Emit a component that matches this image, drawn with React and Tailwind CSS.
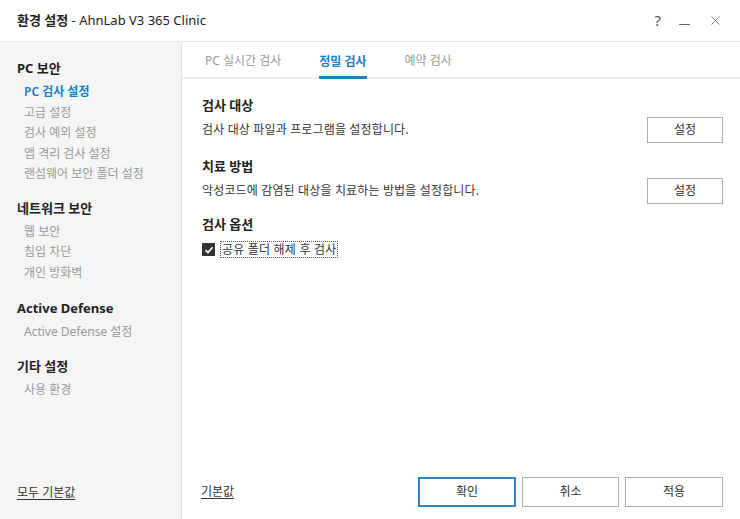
import { X, Minus } from 'lucide-react';

const FONT = { fontFamily: '"Noto Sans", "Noto Sans CJK KR", sans-serif' };

const SIDE = [
  { title: 'PC 보안', items: ['PC 검사 설정', '고급 설정', '검사 예외 설정', '앱 격리 검사 설정', '랜섬웨어 보안 폴더 설정'] },
  { title: '네트워크 보안', items: ['웹 보안', '침입 차단', '개인 방화벽'] },
  { title: 'Active Defense', items: ['Active Defense 설정'], extra: 'mt-[2px]' },
  { title: '기타 설정', items: ['사용 환경'] },
];

function Section({ title, desc, className = '' }) {
  return (
    <div className={className}>
      <h3 className="text-[13px] font-bold text-[#222] leading-[18px]">{title}</h3>
      {desc && (
        <div className="flex items-center justify-between mt-[3px]">
          <p className="text-[12px] text-[#333] tracking-[0.15px]">{desc}</p>
          <button className="w-[76px] h-[26px] border border-[#adadad] bg-white text-[12px] text-[#333]">설정</button>
        </div>
      )}
    </div>
  );
}

export default function App() {
  return (
    <div className="w-[740px] h-[519px] bg-white flex flex-col overflow-hidden" style={FONT}>
      {/* title bar */}
      <div className="h-[42px] shrink-0 flex items-center justify-between pl-[17px] pr-[17px] border-b border-[#e6e6e6]">
        <div className="text-[13px] text-[#222]">
          <span className="font-bold">환경 설정</span> - AhnLab V3 365 Clinic
        </div>
        <div className="flex items-center gap-[15px] text-[#555]">
          <span className="text-[15px] leading-none">?</span>
          <Minus size={17} strokeWidth={1.3} className="mt-[8px]" />
          <X size={15} strokeWidth={1.2} />
        </div>
      </div>

      <div className="flex flex-1 min-h-0">
        {/* sidebar */}
        <div className="w-[182px] shrink-0 bg-[#f5f5f5] border-r border-[#e3e3e3] flex flex-col justify-between pl-[17px] pt-[15px] pb-[17px]">
          <div className="flex flex-col gap-[12px]">
            {SIDE.map((g, gi) => (
              <div key={g.title} className={g.extra || ''}>
                <div className="text-[13px] font-bold text-[#222] leading-[22px]">{g.title}</div>
                <div className="pl-[7px] mt-[3px]">
                  {g.items.map((it, i) => (
                    <div
                      key={it}
                      className={`text-[12px] leading-[20.5px] ${gi === 0 && i === 0 ? 'text-[#1a7ec4] font-semibold' : 'text-[#9a9a9a]'}`}
                    >
                      {it}
                    </div>
                  ))}
                </div>
              </div>
            ))}
          </div>
          <a className="text-[12px] text-[#333] underline underline-offset-2">모두 기본값</a>
        </div>

        {/* main */}
        <div className="flex-1 flex flex-col">
          <div className="h-[37px] shrink-0 border-b-2 border-[#eeeeee] flex items-end pl-[23px] gap-[38px]">
            <div className="text-[12px] text-[#9a9a9a] pb-[7px]">PC 실시간 검사</div>
            <div className="text-[12px] text-[#1a7ec4] font-bold pb-[5px] border-b-[3px] border-[#1a7ec4] -mb-[2px]">정밀 검사</div>
            <div className="text-[12px] text-[#9a9a9a] pb-[7px]">예약 검사</div>
          </div>

          <div className="flex-1 flex flex-col pl-[20px] pr-[17px] pt-[17px]">
            <Section title="검사 대상" desc="검사 대상 파일과 프로그램을 설정합니다." />
            <Section className="mt-[14px]" title="치료 방법" desc="악성코드에 감염된 대상을 치료하는 방법을 설정합니다." />
            <div className="mt-[11px]">
              <h3 className="text-[13px] font-bold text-[#222] leading-[18px]">검사 옵션</h3>
              <label className="flex items-center gap-[5px] mt-[8px]">
                <span className="w-[13px] h-[13px] bg-[#333] flex items-center justify-center">
                  <svg width="10" height="10" viewBox="0 0 10 10">
                    <path d="M1.5 5.2 L4 7.6 L8.6 2.2" fill="none" stroke="#fff" strokeWidth="1.6" />
                  </svg>
                </span>
                <span className="text-[12px] text-[#333] border border-dotted border-[#555] px-[1px] leading-[15px] tracking-[0.2px]">공유 폴더 해제 후 검사</span>
              </label>
            </div>
          </div>

          <div className="h-[57px] shrink-0 flex items-center justify-between pl-[19px] pr-[17px] pt-[3px]">
            <a className="text-[12px] text-[#333] underline underline-offset-2">기본값</a>
            <div className="flex gap-[6px]">
              <button className="w-[98px] h-[30px] border-2 border-[#2f86c6] bg-white text-[12px] text-[#333]">확인</button>
              <button className="w-[97px] h-[30px] border border-[#adadad] bg-white text-[12px] text-[#333]">취소</button>
              <button className="w-[98px] h-[30px] border border-[#adadad] bg-white text-[12px] text-[#333]">적용</button>
            </div>
          </div>
        </div>
      </div>
    </div>
  );
}
